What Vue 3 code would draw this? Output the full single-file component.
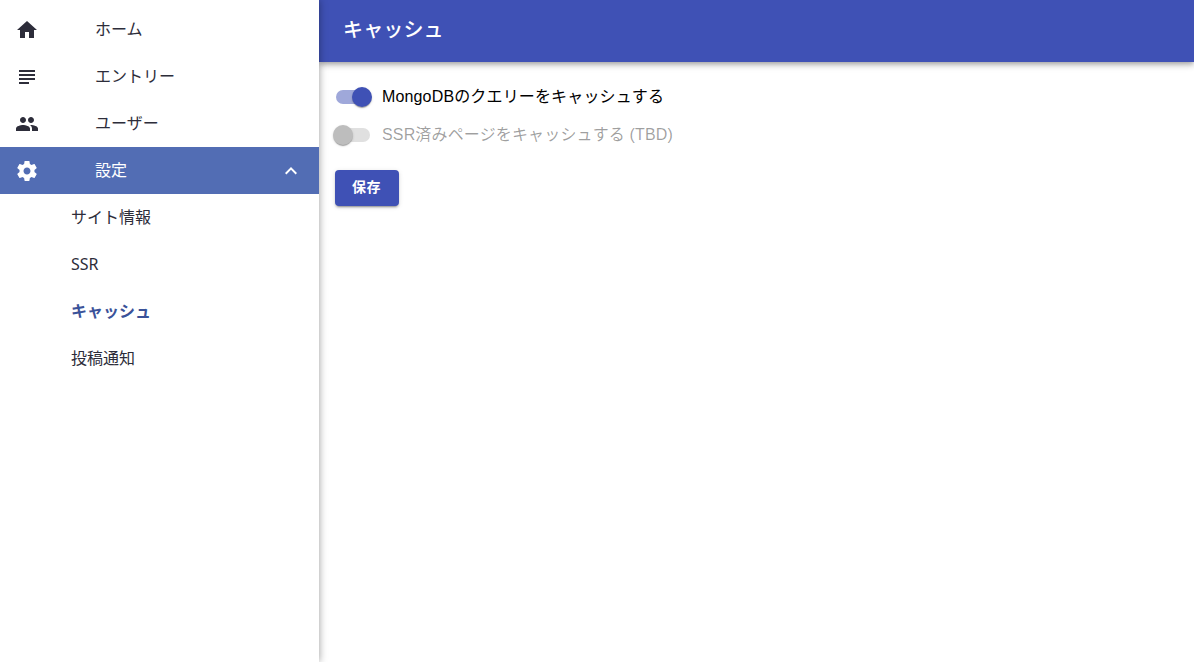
<script setup>
const mainItems = [
  { label: 'ホーム', icon: 'M10 20v-6h4v6h5v-8h3L12 3 2 12h3v8z' },
  { label: 'エントリー', icon: 'M14 17H4v2h10v-2zm6-8H4v2h16V9zM4 15h16v-2H4v2zM4 5v2h16V5H4z' },
  { label: 'ユーザー', icon: 'M16 11c1.66 0 2.99-1.34 2.99-3S17.66 5 16 5c-1.66 0-3 1.34-3 3s1.34 3 3 3zm-8 0c1.66 0 2.99-1.34 2.99-3S9.66 5 8 5C6.34 5 5 6.34 5 8s1.34 3 3 3zm0 2c-2.33 0-7 1.17-7 3.5V19h14v-2.5c0-2.33-4.67-3.5-7-3.5zm8 0c-.29 0-.62.02-.97.05 1.16.84 1.97 1.97 1.97 3.45V19h6v-2.5c0-2.33-4.67-3.5-7-3.5z' }
]
const gear = 'M19.43 12.98c.04-.32.07-.64.07-.98s-.03-.66-.07-.98l2.11-1.65c.19-.15.24-.42.12-.64l-2-3.46c-.12-.22-.39-.3-.61-.22l-2.49 1c-.52-.4-1.08-.73-1.69-.98l-.38-2.65C14.46 2.18 14.25 2 14 2h-4c-.25 0-.46.18-.49.42l-.38 2.65c-.61.25-1.17.59-1.69.98l-2.49-1c-.23-.09-.49 0-.61.22l-2 3.46c-.13.22-.07.49.12.64l2.11 1.65c-.04.32-.07.65-.07.98s.03.66.07.98l-2.11 1.65c-.19.15-.24.42-.12.64l2 3.46c.12.22.39.3.61.22l2.49-1c.52.4 1.08.73 1.69.98l.38 2.65c.03.24.24.42.49.42h4c.25 0 .46-.18.49-.42l.38-2.65c.61-.25 1.17-.59 1.69-.98l2.49 1c.23.09.49 0 .61-.22l2-3.46c.12-.22.07-.49-.12-.64l-2.11-1.65zM12 15.5c-1.93 0-3.5-1.57-3.5-3.5s1.57-3.5 3.5-3.5 3.5 1.57 3.5 3.5-1.57 3.5-3.5 3.5z'
const subItems = [
  { label: 'サイト情報' },
  { label: 'SSR' },
  { label: 'キャッシュ', active: true },
  { label: '投稿通知' }
]
</script>

<template>
  <div class="app">
    <aside class="drawer">
      <nav class="list">
        <a v-for="item in mainItems" :key="item.label" class="row">
          <svg class="icon" viewBox="0 0 24 24"><path :d="item.icon" /></svg>
          <span class="text">{{ item.label }}</span>
        </a>
        <a class="row selected">
          <svg class="icon" viewBox="0 0 24 24"><path :d="gear" /></svg>
          <span class="text">設定</span>
          <svg class="chevron" viewBox="0 0 24 24"><path d="M12 8l-6 6 1.41 1.41L12 10.83l4.59 4.58L18 14z" /></svg>
        </a>
        <a
          v-for="item in subItems"
          :key="item.label"
          class="row sub"
          :class="{ active: item.active }"
        ><span class="text">{{ item.label }}</span></a>
      </nav>
    </aside>
    <div class="main">
      <header class="bar"><h1>キャッシュ</h1></header>
      <section class="content">
        <label class="option">
          <span class="switch on"><span class="track"></span><span class="thumb"></span></span>
          <span>MongoDBのクエリーをキャッシュする</span>
        </label>
        <label class="option disabled">
          <span class="switch"><span class="track"></span><span class="thumb"></span></span>
          <span>SSR済みページをキャッシュする (TBD)</span>
        </label>
        <button class="save" type="button"><span>保存</span></button>
      </section>
    </div>
  </div>
</template>

<style>
html, body { margin: 0; background: #fff; overflow: hidden; }
</style>

<style scoped>
.app {
  display: flex;
  width: 1194px;
  height: 662px;
  font-family: "Noto Sans", "Noto Sans CJK JP", sans-serif;
  font-size: 16px;
  line-height: 24px;
  color: rgba(0, 0, 0, 0.87);
  overflow: hidden;
}
.drawer {
  position: relative;
  z-index: 2;
  flex: 0 0 319px;
  background: #fff;
  box-shadow: 0 0 8px rgba(0, 0, 0, 0.4);
}
.list { padding-top: 6px; }
.row {
  display: flex;
  align-items: center;
  height: 47px;
  padding-left: 15px;
  color: #2d2d3a;
}
.text { margin-bottom: 2px; }
.row .icon {
  flex: 0 0 24px;
  width: 24px;
  height: 24px;
  margin-right: 56px;
  fill: #2d2d3a;
}
.selected { background: #526db4; color: #fff; position: relative; }
.selected .icon { fill: #fff; }
.chevron {
  position: absolute;
  right: 16px;
  top: 12px;
  width: 24px;
  height: 24px;
  fill: #fff;
}
.sub { padding-left: 71px; }
.sub.active { font-weight: 700; color: #3a5299; }
.main { flex: 1; min-width: 0; display: flex; flex-direction: column; }
.bar {
  height: 62px;
  display: flex;
  align-items: center;
  padding-left: 24px;
  background: #3f51b5;
  color: #fff;
  font-family: "Liberation Sans", "Noto Sans CJK JP", sans-serif;
  box-shadow: 0 2px 4px -1px rgba(0,0,0,.2), 0 4px 5px 0 rgba(0,0,0,.14), 0 1px 10px 0 rgba(0,0,0,.12);
}
.bar h1 { margin: 0 0 2px; font-size: 20px; font-weight: 500; letter-spacing: 0.0075em; }
.content {
  padding: 16px;
  display: flex;
  flex-direction: column;
  align-items: flex-start;
  font-family: "Liberation Sans", "Noto Sans CJK JP", sans-serif;
  letter-spacing: 0.00938em;
}
.option {
  display: flex;
  align-items: center;
  height: 38px;
  color: #000;
}
.option.disabled { color: rgba(0, 0, 0, 0.38); }
.switch { position: relative; width: 36px; height: 20px; margin-left: 1px; margin-right: 10px; }
.track {
  position: absolute;
  left: 0;
  top: 3px;
  width: 34px;
  height: 14px;
  border-radius: 7px;
  background: #e0e0e0;
}
.on .track { background: #9fa8da; }
.thumb {
  position: absolute;
  left: -3px;
  top: 0;
  width: 20px;
  height: 20px;
  border-radius: 50%;
  background: #bdbdbd;
  box-shadow: 0 2px 1px -1px rgba(0,0,0,.2), 0 1px 1px 0 rgba(0,0,0,.14), 0 1px 3px 0 rgba(0,0,0,.12);
}
.on .thumb { left: 16px; background: #3f51b5; }
.save {
  margin-top: 16px;
  width: 64px;
  height: 36px;
  padding: 0 1px 2px 0;
  border: 0;
  border-radius: 4px;
  background: #3f51b5;
  color: #fff;
  font-family: "Liberation Sans", "Noto Sans CJK JP", sans-serif;
  font-size: 14px;
  font-weight: 700;
  line-height: 1.75;
  letter-spacing: 0.02857em;
  box-shadow: 0 3px 1px -2px rgba(0,0,0,.2), 0 2px 2px 0 rgba(0,0,0,.14), 0 1px 5px 0 rgba(0,0,0,.12);
}
</style>
